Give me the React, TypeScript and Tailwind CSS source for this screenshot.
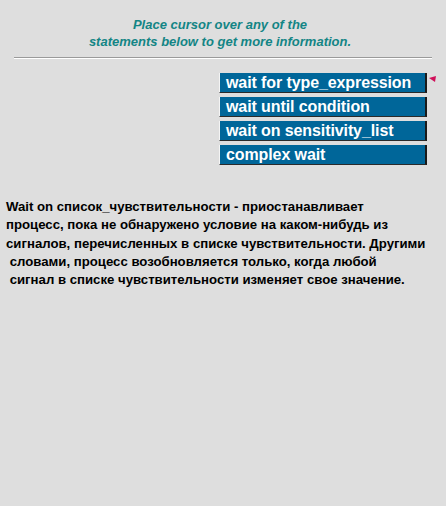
import React from 'react';

const items = ['wait for type_expression', 'wait until condition', 'wait on sensitivity_list', 'complex wait'];

const App = () => {
  return (
    <div className="w-[446px] h-[506px] bg-[#dedede] font-['Liberation_Sans',Arial,sans-serif] overflow-hidden">
      <div className="w-[440px] pt-[16px] text-center text-[13px] leading-[17px] font-bold italic text-[#138585]">
        <p>Place cursor over any of the</p>
        <p>statements below to get more information.</p>
      </div>
      <div className="mx-[14px] mt-[7px] w-[418px] h-[2px] border-t border-[#9a9a9a] border-b border-b-white" />
      <div className="flex flex-col gap-[4px] ml-[219px] mt-[14px] w-[216px] relative">
        {items.map((item, i) => (
          <div key={item} className="relative">
            <div className="w-[208px] h-[20px] bg-[#006699] border-l border-l-[#f4f4f4] border-r-2 border-r-[#1a1a1a] border-b border-b-[#2a2a2a] text-white text-[16px] leading-[19px] font-bold pl-[6px] whitespace-nowrap tracking-[-0.1px]">
              {item}
            </div>
            {i === 0 && (
              <svg className="absolute left-[210px] top-[3px]" width="8" height="6" viewBox="0 0 8 6">
                <polygon points="0,2 7,0 6,6" fill="#d0105a" />
              </svg>
            )}
          </div>
        ))}
      </div>
      <div className="mt-[33px] pl-[6px] text-[13.2px] leading-[18.3px] font-bold text-black whitespace-pre">
        <p>Wait on список_чувствительности - приостанавливает</p>
        <p>процесс, пока не обнаружено условие на каком-нибудь из</p>
        <p>сигналов, перечисленных в списке чувствительности. Другими</p>
        <p> словами, процесс возобновляется только, когда любой</p>
        <p> сигнал в списке чувствительности изменяет свое значение.</p>
      </div>
    </div>
  );
};

export default App;
